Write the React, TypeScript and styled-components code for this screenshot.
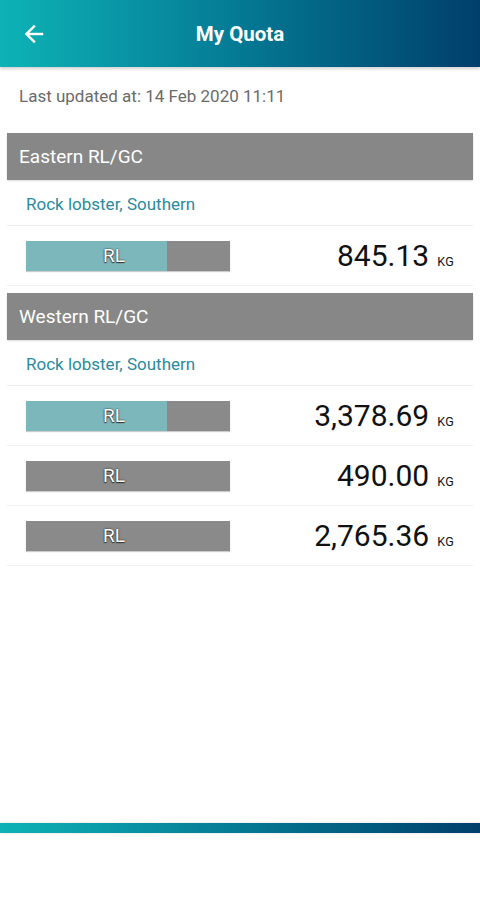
import React from 'react';
import styled, { createGlobalStyle } from 'styled-components';

const GlobalStyle = createGlobalStyle`
  html, body {
    margin: 0;
    padding: 0;
    background: #ffffff;
    font-family: Roboto, "Noto Sans", "Liberation Sans", sans-serif;
  }
`;

const Screen = styled.div`
  width: 480px;
  height: 900px;
  display: flex;
  flex-direction: column;
  background: #fff;
  overflow: hidden;
`;

const Header = styled.header`
  height: 67px;
  flex-shrink: 0;
  display: flex;
  align-items: center;
  position: relative;
  background: linear-gradient(to right, #0db3b6, #057f98 45%, #003f6c);
  box-shadow: 0 2px 3px rgba(0, 0, 0, 0.18);
  z-index: 1;
`;

const BackButton = styled.button`
  width: 68px;
  height: 67px;
  border: none;
  background: transparent;
  display: flex;
  align-items: center;
  justify-content: center;
  padding: 0;
  cursor: pointer;
`;

const Title = styled.h1`
  position: absolute;
  left: 0;
  right: 0;
  margin: 0;
  text-align: center;
  color: #fff;
  font-size: 20.5px;
  font-weight: 700;
  pointer-events: none;
`;

const Content = styled.main`
  flex: 1;
  padding: 0 7px;
`;

const Updated = styled.p`
  margin: 0;
  padding: 19px 12px 0;
  height: 66px;
  box-sizing: border-box;
  color: #6b6b6b;
  font-size: 17px;
`;

const Section = styled.section`
  margin-bottom: 7px;
`;

const SectionHead = styled.div`
  height: 47px;
  display: flex;
  align-items: center;
  padding: 0 12px;
  background: #878787;
  color: #fff;
  font-size: 19px;
  box-shadow: 0 1px 2px rgba(0, 0, 0, 0.15);
`;

const Species = styled.div`
  height: 46px;
  display: flex;
  align-items: center;
  padding: 2px 19px 0;
  box-sizing: border-box;
  color: #2a8b9c;
  font-size: 17px;
  border-bottom: 1px solid #ececec;
`;

const Row = styled.div`
  height: 59px;
  display: flex;
  align-items: center;
  padding: 0 19px;
  border-bottom: 1px solid #f0f0f0;
`;

const Bar = styled.div`
  width: 204px;
  height: 30px;
  position: relative;
  background: #8a8a8a;
  box-shadow: 0 1px 1px rgba(0, 0, 0, 0.2);
  display: flex;
  align-items: center;
  justify-content: center;
`;

const Fill = styled.div`
  position: absolute;
  left: 0;
  top: 0;
  bottom: 0;
  background: #7cb8bb;
`;

const BarLabel = styled.span`
  position: relative;
  color: #fff;
  font-size: 19px;
  padding-right: 28px;
  text-shadow: 0 0 2px #222, 0 1px 1px #333;
`;

const Amount = styled.div`
  flex: 1;
  display: flex;
  justify-content: flex-end;
  align-items: baseline;
  color: #111;
`;

const Value = styled.span`
  font-size: 30px;
`;

const Unit = styled.span`
  margin-left: 8px;
  font-size: 12.5px;
  letter-spacing: 0.3px;
`;

const BottomBar = styled.div`
  height: 10px;
  margin-bottom: 67px;
  flex-shrink: 0;
  background: linear-gradient(to right, #0db3b6, #057f98 45%, #003f6c);
  box-shadow: 0 0 3px rgba(0, 0, 0, 0.15);
`;

type Quota = { label: string; value: string; used: number };

const sections: { name: string; species: string; rows: Quota[] }[] = [
  {
    name: 'Eastern RL/GC',
    species: 'Rock lobster, Southern',
    rows: [{ label: 'RL', value: '845.13', used: 0.69 }],
  },
  {
    name: 'Western RL/GC',
    species: 'Rock lobster, Southern',
    rows: [
      { label: 'RL', value: '3,378.69', used: 0.69 },
      { label: 'RL', value: '490.00', used: 0 },
      { label: 'RL', value: '2,765.36', used: 0 },
    ],
  },
];

export default function App() {
  return (
    <Screen>
      <GlobalStyle />
      <Header>
        <BackButton aria-label="Back">
          <svg width="24" height="24" viewBox="0 0 24 24" fill="none" stroke="#fff" strokeWidth="2.4" strokeLinecap="square">
            <path d="M20 12H5" />
            <path d="M12 4.5L4.5 12L12 19.5" />
          </svg>
        </BackButton>
        <Title>My Quota</Title>
      </Header>
      <Content>
        <Updated>Last updated at: 14 Feb 2020 11:11</Updated>
        {sections.map((s) => (
          <Section key={s.name}>
            <SectionHead>{s.name}</SectionHead>
            <Species>{s.species}</Species>
            {s.rows.map((r, i) => (
              <Row key={i}>
                <Bar>
                  {r.used > 0 && <Fill style={{ width: `${r.used * 100}%` }} />}
                  <BarLabel>{r.label}</BarLabel>
                </Bar>
                <Amount>
                  <Value>{r.value}</Value>
                  <Unit>KG</Unit>
                </Amount>
              </Row>
            ))}
          </Section>
        ))}
      </Content>
      <BottomBar />
    </Screen>
  );
}
